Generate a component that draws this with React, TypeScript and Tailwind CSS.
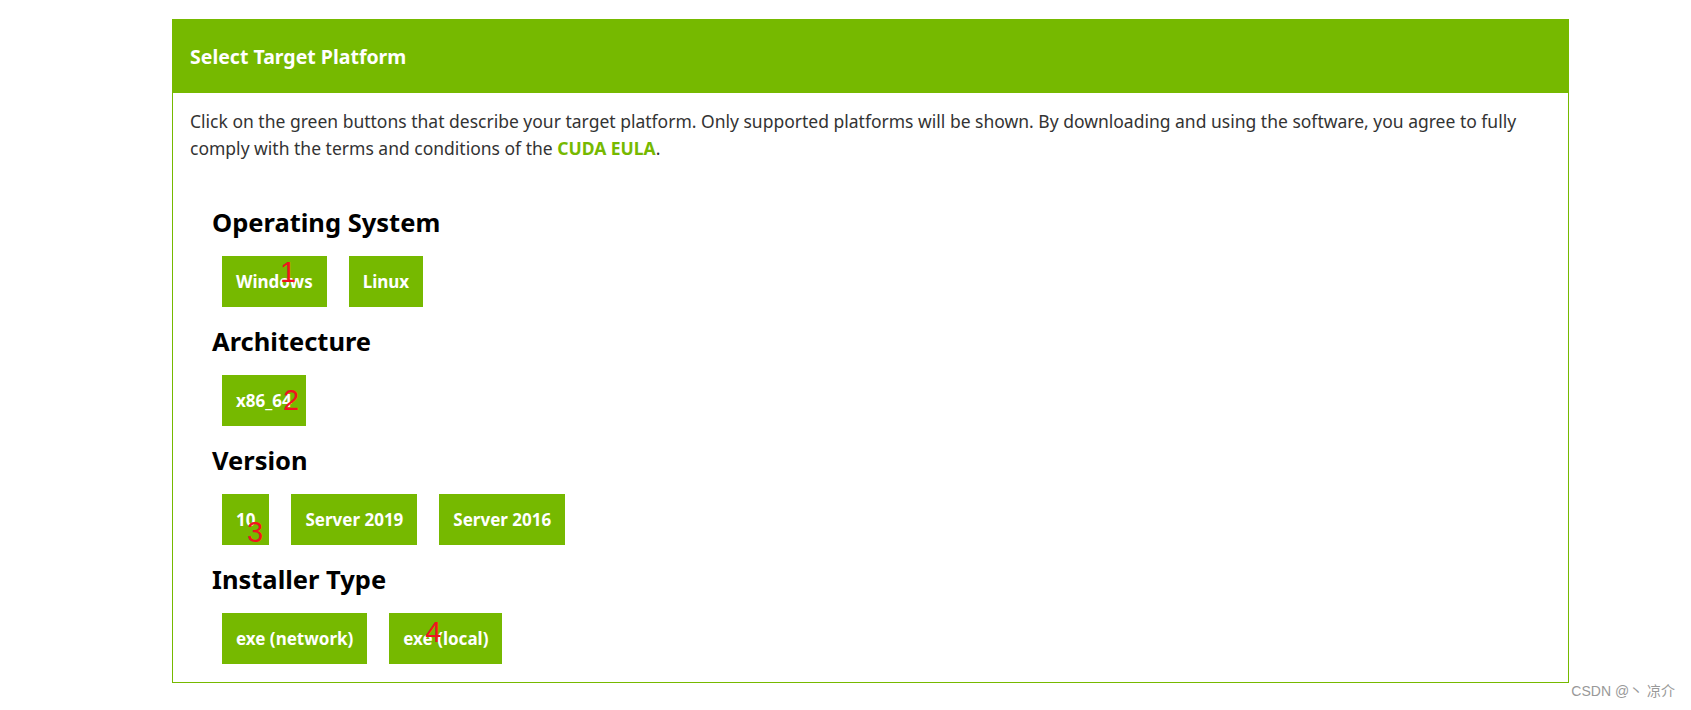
type Opt = { label: string; mark?: string; mx?: string };

const sections: { title: string; options: Opt[] }[] = [
  { title: "Operating System", options: [{ label: "Windows", mark: "1", mx: "left-[58px] top-[2px]" }, { label: "Linux" }] },
  { title: "Architecture", options: [{ label: "x86_64", mark: "2", mx: "left-[61px] top-[11px]" }] },
  {
    title: "Version",
    options: [{ label: "10", mark: "3", mx: "left-[25px] top-[24px]" }, { label: "Server 2019" }, { label: "Server 2016" }],
  },
  {
    title: "Installer Type",
    options: [{ label: "exe (network)" }, { label: "exe (local)", mark: "4", mx: "left-[36px] top-[5px]" }],
  },
];

function OptionButton({ opt }: { opt: Opt }) {
  return (
    <button className="relative h-[51px] px-[14px] bg-[#76b900] text-white font-bold text-[17px]">
      {opt.label}
      {opt.mark && (
        <span
          className={"absolute text-[29px] font-normal leading-none text-[#f0141e] " + opt.mx}
          style={{ fontFamily: '"Liberation Sans", sans-serif' }}
        >
          {opt.mark}
        </span>
      )}
    </button>
  );
}

export default function App() {
  return (
    <div className="relative w-full h-[710px] bg-white" style={{ fontFamily: '"Noto Sans", sans-serif' }}>
      <div className="ml-[172px] pt-[19px]">
        <div className="w-[1397px] h-[664px] border border-[#76b900]">
          <div className="h-[73px] bg-[#76b900] flex items-center px-[17px] text-white font-bold text-[19.5px]">
            Select Target Platform
          </div>
          <div className="px-[17px] pt-[15px]">
            <p className="text-[17.5px] leading-[27px] text-[#333]">
              Click on the green buttons that describe your target platform. Only supported platforms will be shown. By
              downloading and using the software, you agree to fully
              <br />
              comply with the terms and conditions of the <a className="font-bold text-[#76b900]">CUDA EULA</a>.
            </p>
            <div className="pl-[22px] pt-[45px]">
              {sections.map((s) => (
                <div key={s.title} className="mb-[19px]">
                  <h2 className="text-[25.5px] leading-[30px] font-bold text-black">{s.title}</h2>
                  <div className="flex gap-[22px] pl-[10px] mt-[19px]">
                    {s.options.map((o) => (
                      <OptionButton key={o.label} opt={o} />
                    ))}
                  </div>
                </div>
              ))}
            </div>
          </div>
        </div>
      </div>
      <div
        className="absolute right-[16px] bottom-[8px] text-[14px] text-[#999]"
        style={{ fontFamily: '"Liberation Sans", "Noto Sans CJK SC", sans-serif' }}
      >
        CSDN @丶 凉介
      </div>
    </div>
  );
}
